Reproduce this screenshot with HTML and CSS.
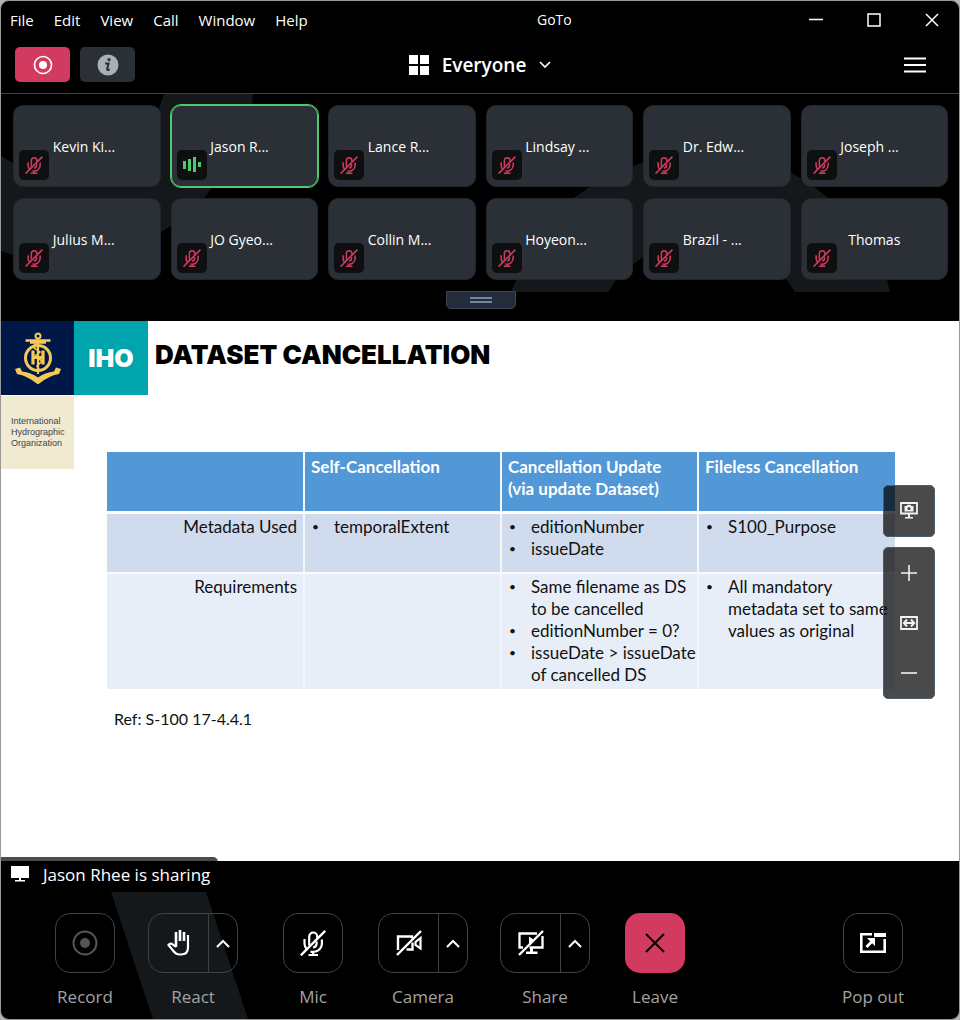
FILE: index.html
```html
<!DOCTYPE html>
<html lang="en">
<head>
<meta charset="utf-8">
<meta name="viewport" content="width=device-width, initial-scale=1">
<title>GoTo</title>
<link rel="stylesheet" href="styles.css">
</head>
<body>
<svg class="defs" aria-hidden="true">
  <symbol id="mic-off" viewBox="0 0 26 26">
    <path d="M9.2 15.4V6.5a4 4 0 0 1 8 0V8M16.6 11.5v2.4a4 4 0 0 1-3.6 3.6M4.500 9v4.500a8.500 8.500 0 0 0 2 5.400M21.900 9.500v4a8.700 8.700 0 0 1-11.400 8M13.200 22v3M8.500 25h9.500" fill="none" stroke="currentColor" stroke-width="2.200"/>
    <path d="M.8 25.300 25.200.9" stroke="currentColor" stroke-width="2.400"/>
  </symbol>
  <symbol id="chevron-up" viewBox="0 0 14 9"><path d="M1 8l6-6 6 6" fill="none" stroke="currentColor" stroke-width="2"/></symbol>
</svg>
<div class="window">
  <header class="titlebar">
    <nav class="menu">
      <button>File</button><button>Edit</button><button>View</button><button>Call</button><button>Window</button><button>Help</button>
    </nav>
    <h1 class="app-name">GoTo</h1>
    <div class="window-buttons">
      <button aria-label="Minimize"><svg width="14" height="14"><path d="M0 6.500h14" stroke="currentColor" stroke-width="1.400"/></svg></button>
      <button aria-label="Maximize"><svg width="14" height="14"><path d="M1 1h12v12H1z" fill="none" stroke="currentColor" stroke-width="1.500"/></svg></button>
      <button aria-label="Close"><svg width="14" height="14"><path d="M1 1l12 12M13 1 1 13" stroke="currentColor" stroke-width="1.500"/></svg></button>
    </div>
  </header>

  <div class="toolbar">
    <div class="toolbar-left">
      <button class="chip chip--rec" aria-label="Recording"><svg width="20" height="20"><circle cx="10" cy="10" r="8.500" fill="none" stroke="#fff" stroke-width="1.700"/><circle cx="10" cy="10" r="4" fill="#fff"/></svg></button>
      <button class="chip" aria-label="Information"><svg width="22" height="22"><circle cx="11" cy="11" r="10.500" fill="#a9afb8"/><circle cx="12" cy="5.700" r="1.600" fill="#2a3036"/><path d="M8 9.600h3.500l-1.300 5.400q-.2 1.600 2.600.4" fill="none" stroke="#2a3036" stroke-width="2"/></svg></button>
    </div>
    <button class="view-switch">
      <svg width="20" height="20"><path d="M0 0h9v9H0zM11 0h9v9h-9zM0 11h9v9H0zM11 11h9v9h-9z" fill="#fff"/></svg>
      Everyone
      <svg width="12" height="8"><path d="M1 1l5 5 5-5" fill="none" stroke="currentColor" stroke-width="1.600"/></svg>
    </button>
    <button class="hamburger" aria-label="Menu"><svg width="24" height="16"><path d="M1 1.500h22M1 8h22M1 14.500h22" stroke="#fff" stroke-width="2.200"/></svg></button>
  </div>

  <section class="participants" aria-label="Participants">
    <svg class="backdrop" viewBox="0 0 958 198" preserveAspectRatio="none" aria-hidden="true">
      <path d="M0 62l12 7Q110 100 158 14l5-14h89l-1 11Q245 58 210 95q-20 27-50 43Q95 174 12 161L0 157z"/>
      <path d="M510 198l5-12Q530 137 574 103q60-44 135-44 65 0 117 44 42 36 60 83l3 12H794l-8-12Q698 102 615 186l-8 12z"/>
    </svg>
    <ul class="tiles">
      <li class="tile"><span class="badge"><svg><use href="#mic-off"/></svg></span><span class="name">Kevin Ki...</span></li>
      <li class="tile tile--active"><span class="badge badge--live"><svg viewBox="0 0 18 16"><path d="M0 4h3v8H0zM5 2h3v12H5zM10 0h3v15h-3zM15 5h3v5h-3z" fill="currentColor"/></svg></span><span class="name">Jason R...</span></li>
      <li class="tile"><span class="badge"><svg><use href="#mic-off"/></svg></span><span class="name">Lance R...</span></li>
      <li class="tile"><span class="badge"><svg><use href="#mic-off"/></svg></span><span class="name">Lindsay ...</span></li>
      <li class="tile"><span class="badge"><svg><use href="#mic-off"/></svg></span><span class="name">Dr. Edw...</span></li>
      <li class="tile"><span class="badge"><svg><use href="#mic-off"/></svg></span><span class="name">Joseph ...</span></li>
      <li class="tile"><span class="badge"><svg><use href="#mic-off"/></svg></span><span class="name">Julius M...</span></li>
      <li class="tile"><span class="badge"><svg><use href="#mic-off"/></svg></span><span class="name">JO Gyeo...</span></li>
      <li class="tile"><span class="badge"><svg><use href="#mic-off"/></svg></span><span class="name">Collin M...</span></li>
      <li class="tile"><span class="badge"><svg><use href="#mic-off"/></svg></span><span class="name">Hoyeon...</span></li>
      <li class="tile"><span class="badge"><svg><use href="#mic-off"/></svg></span><span class="name">Brazil - ...</span></li>
      <li class="tile"><span class="badge"><svg><use href="#mic-off"/></svg></span><span class="name name--short">Thomas</span></li>
    </ul>
    <button class="grip" aria-label="Resize participants"><svg width="22" height="6"><path d="M0 1h22M0 5h22" stroke="#8fa6bd" stroke-width="1.500"/></svg></button>
  </section>

  <main class="slide">
    <div class="slide-head">
      <div class="brand">
        <div class="brand-mark">
          <svg width="46" height="52" viewBox="0 0 46 52" aria-label="IHO emblem">
            <g fill="none" stroke="#f5c956">
              <circle cx="23" cy="4" r="2.500" stroke-width="2"/>
              <circle cx="23" cy="26" r="12.500" stroke-width="3"/>
              <path d="M10.500 8.500h25M15 10.500h16" stroke-width="2.600"/>
              <path d="M18 18.500v14M28 18.500v14M18 25.500h10" stroke-width="3.200"/>
              <path d="M23 7v35" stroke-width="2.200"/>
              <path d="M21 11l-3 4 7 5-5 4 7 5-5 5 3 5" stroke-width="1.600"/>
            </g>
            <path d="M0 37l5-1.500 2 4q9 1 16 6 7-5 16-6l2-4 5 1.500-2 5q-11 2-21 10.500Q13 44 2 42z" fill="#f5c956"/>
          </svg>
        </div>
        <div class="brand-abbr">IHO</div>
        <div class="brand-name">International<br>Hydrographic<br>Organization</div>
      </div>
      <h2 class="slide-title">DATASET CANCELLATION</h2>
    </div>
    <div class="slide-body">
      <table class="matrix">
        <thead>
          <tr><th></th><th scope="col">Self-Cancellation</th><th scope="col">Cancellation Update<br>(via update Dataset)</th><th scope="col">Fileless Cancellation</th></tr>
        </thead>
        <tbody>
          <tr class="row-a"><th scope="row">Metadata Used</th><td><ul><li>temporalExtent</li></ul></td><td><ul><li>editionNumber</li><li>issueDate</li></ul></td><td><ul><li>S100_Purpose</li></ul></td></tr>
          <tr class="row-b"><th scope="row">Requirements</th><td></td><td><ul><li>Same filename as DS<br>to be cancelled</li><li>editionNumber = 0?</li><li>issueDate &gt; issueDate<br>of cancelled DS</li></ul></td><td><ul><li>All mandatory<br>metadata set to same<br>values as original</li></ul></td></tr>
        </tbody>
      </table>
      <p class="slide-ref">Ref: S-100 17-4.4.1</p>
    </div>
    <div class="float-tools">
      <div class="float-group">
        <button aria-label="Take screenshot"><svg width="18" height="18"><path d="M1 1h16v10.500H1z" fill="none" stroke="currentColor" stroke-width="1.800"/><path d="M4.500 4h2l1-1.200h3l1 1.200h2v5.500h-9zM8 12h2v3h3v1.500H5V15h3z" fill="currentColor"/><circle cx="9" cy="6.500" r="1.500" fill="#484848"/></svg></button>
      </div>
      <div class="float-group">
        <button aria-label="Zoom in"><svg width="16" height="16"><path d="M0 8h16M8 0v16" stroke="currentColor" stroke-width="1.600"/></svg></button>
        <button aria-label="Fit to width"><svg width="18" height="14"><path d="M1 1h16v12H1z" fill="none" stroke="currentColor" stroke-width="1.800"/><path d="M4 7h10M7 3.500 3.800 7 7 10.500M11 3.500 14.200 7 11 10.500" fill="none" stroke="currentColor" stroke-width="1.900"/></svg></button>
        <button aria-label="Zoom out"><svg width="16" height="16"><path d="M0 8h16" stroke="currentColor" stroke-width="1.600"/></svg></button>
      </div>
    </div>
  </main>

  <div class="sharing">
    <div class="sharing-label">
      <svg width="18" height="16"><path d="M0 0h18v12H0zM8 12h2v2h4v1.500H4V14h4z" fill="#fff"/></svg>
      Jason Rhee is sharing
    </div>
  </div>

  <footer class="controls">
    <svg class="stripe" width="140" height="128" aria-hidden="true"><path d="M0 1h95l42 127H42z"/></svg>
    <div class="control-row">
      <div class="control">
        <button class="key key--dim" aria-labelledby="l-rec"><svg width="26" height="26"><circle cx="13" cy="13" r="11.500" fill="none" stroke="currentColor" stroke-width="2"/><circle cx="13" cy="13" r="5" fill="currentColor"/></svg></button>
        <span class="label" id="l-rec">Record</span>
      </div>
      <div class="control">
        <div class="split">
          <button class="key" aria-labelledby="l-react"><svg width="24" height="26"><path d="M9 17V2M13 11V0M17 11V2" fill="none" stroke="currentColor" stroke-width="2.600"/><path d="M21 5v12.500q0 7-7 7h-1.500q-3.500 0-5.500-2.800L1.500 15q1.800-2.400 4.500-.4l3 2.300" fill="none" stroke="currentColor" stroke-width="2.200"/></svg></button>
          <button class="more" aria-label="React options"><svg width="14" height="9"><use href="#chevron-up"/></svg></button>
        </div>
        <span class="label" id="l-react">React</span>
      </div>
      <div class="control">
        <button class="key" aria-labelledby="l-mic"><svg width="26" height="26"><use href="#mic-off"/></svg></button>
        <span class="label" id="l-mic">Mic</span>
      </div>
      <div class="control">
        <div class="split">
          <button class="key" aria-labelledby="l-cam"><svg width="26" height="26"><path d="M2 20V6.500h14v2M16.500 12.500v7h-6" fill="none" stroke="currentColor" stroke-width="2.400"/><path d="M24.500 8v10.500L19.500 15v-3z" fill="none" stroke="currentColor" stroke-width="2.200"/><path d="M1 25 25 1" stroke="currentColor" stroke-width="2.400"/></svg></button>
          <button class="more" aria-label="Camera options"><svg width="14" height="9"><use href="#chevron-up"/></svg></button>
        </div>
        <span class="label" id="l-cam">Camera</span>
      </div>
      <div class="control">
        <div class="split">
          <button class="key" aria-labelledby="l-share"><svg width="26" height="26"><path d="M5 17.500H1.500V3.500H19M24.500 6v11.500h-13" fill="none" stroke="currentColor" stroke-width="2.300"/><path d="M11 6.500l5 3.500-5 5zM12 18h3v3.500h4.500V24H8v-2.500h4z" fill="currentColor"/><path d="M1 25 25 1" stroke="currentColor" stroke-width="2.400"/></svg></button>
          <button class="more" aria-label="Share options"><svg width="14" height="9"><use href="#chevron-up"/></svg></button>
        </div>
        <span class="label" id="l-share">Share</span>
      </div>
      <div class="control">
        <button class="key key--leave" aria-labelledby="l-leave"><svg width="20" height="20"><path d="M1 1l18 18M19 1 1 19" stroke="currentColor" stroke-width="2"/></svg></button>
        <span class="label" id="l-leave">Leave</span>
      </div>
    </div>
    <div class="control">
      <button class="key" aria-labelledby="l-pop"><svg width="26" height="20"><path d="M12 1.300H1.300v17.400h23.400V6" fill="none" stroke="currentColor" stroke-width="2.600"/><path d="M14 0h12v4H14zM7 5h8v8l-2.800-2.800L7.500 15l-2-2 4.700-4.800z" fill="currentColor"/></svg></button>
      <span class="label" id="l-pop">Pop out</span>
    </div>
  </footer>
</div>
</body>
</html>
```

FILE: styles.css
```css
* { box-sizing: border-box; }
body {
  margin: 0;
  background: #b4b4b4;
  font-family: "Open Sans", "Noto Sans", sans-serif;
  color: #fff;
}
button {
  display: flex;
  align-items: center;
  justify-content: center;
  margin: 0;
  padding: 0;
  border: 0;
  background: none;
  color: inherit;
  font: inherit;
}
ul { margin: 0; padding: 0; list-style: none; }
.defs { display: none; }

.window {
  display: flex;
  flex-direction: column;
  min-height: 100vh;
  overflow: hidden;
  border: 1px solid #999;
  border-radius: 9px;
  background: #000;
}

.titlebar {
  display: grid;
  grid-template-columns: auto 1fr auto;
  align-items: center;
  height: 37px;
  padding: 0 20px 0 9px;
  font-size: 15px;
}
.menu { display: flex; gap: 20px; }
.app-name {
  margin: 0;
  padding-right: 8px;
  font-size: 14px;
  font-weight: 400;
  text-align: center;
}
.window-buttons { display: flex; justify-content: flex-end; gap: 44px; }

.toolbar {
  display: grid;
  grid-template-columns: 1fr auto 1fr;
  align-items: center;
  height: 56px;
  padding: 0 14px 2px;
  border-bottom: 1px solid #3c444b;
}
.toolbar-left { display: flex; gap: 10px; }
.chip {
  width: 55px;
  height: 35px;
  border-radius: 5px;
  background: #2a3036;
}
.chip--rec { background: #d33a60; }
.view-switch { gap: 13px; font-size: 19px; font-weight: 600; }
.hamburger { justify-self: end; margin-right: 18px; }

.participants {
  position: relative;
  display: flex;
  flex-direction: column;
  align-items: center;
  padding: 11px 11px 12px 12px;
}
.backdrop {
  position: absolute;
  top: 0;
  left: 0;
  width: 100%;
  height: 198px;
  fill: #14181b;
}
.tiles {
  position: relative;
  display: grid;
  grid-template-columns: repeat(6, 1fr);
  gap: 11px 10px;
  width: 100%;
}
.tile {
  position: relative;
  display: flex;
  align-items: center;
  justify-content: center;
  height: 82px;
  border: 1px solid #20262b;
  border-radius: 10px;
  background: #2a3036;
}
.tile--active { border-color: #4fcb6e; outline: 1px solid #4fcb6e; }
.name { width: 68px; font-size: 14px; white-space: nowrap; }
.name--short { text-align: center; }
.badge {
  position: absolute;
  left: 5px;
  bottom: 6px;
  display: flex;
  align-items: center;
  justify-content: center;
  width: 30px;
  height: 30px;
  border-radius: 5px;
  background: #0d0f11;
  color: #d33a60;
}
.badge svg { width: 18px; height: 18px; }
.badge--live { color: #4fcb6e; }
.grip {
  position: relative;
  width: 70px;
  height: 18px;
  margin: 11px 0 0;
  border: 1px solid #3b4654;
  border-radius: 0 0 5px 5px;
  background: #222c3a;
}

.slide {
  position: relative;
  flex: 1;
  background: #fff;
  color: #111;
}
.slide-head { display: flex; gap: 7px; }
.brand {
  display: grid;
  grid-template-columns: 73px 74px;
  grid-template-rows: 74px 73px;
  row-gap: 1px;
}
.brand-mark, .brand-abbr, .brand-name { display: flex; align-items: center; }
.brand-mark { justify-content: center; background: #001848; }
.brand-abbr {
  justify-content: center;
  background: #00a4ac;
  color: #fff;
  font: 900 25px Inter, sans-serif;
}
.brand-name {
  padding-left: 10px;
  background: #f0ead0;
  color: #3c4450;
  font: 9px/11px "Liberation Sans", Arial, sans-serif;
}
.slide-title {
  margin: 19px 0 0;
  color: #000;
  font: 900 26px/30px Inter, sans-serif;
}
.slide-body {
  margin: -17px 64px 0 106px;
  font-family: Lato, sans-serif;
  font-size: 17px;
  line-height: 22px;
}
.matrix {
  width: 100%;
  table-layout: fixed;
  border-collapse: collapse;
}
.matrix th, .matrix td {
  padding: 2px 6px 3px;
  border-left: 2px solid #f4f8fc;
  text-align: left;
  vertical-align: top;
  white-space: nowrap;
}
.matrix tr > :first-child { border-left: 0; }
.matrix thead th {
  height: 60px;
  padding-top: 4px;
  background: #5297d6;
  color: #fff;
  font-weight: 700;
}
.matrix tbody th { font-weight: 400; text-align: right; }
.row-a { height: 61px; border-top: 3px solid #fff; background: #d0dcee; }
.row-b { height: 115px; border-top: 2px solid #f8fbfe; background: #e8eef7; }
.matrix li { position: relative; padding-left: 23px; }
.matrix li::before { content: "•"; position: absolute; left: 1px; font-size: 12px; }
.slide-ref { margin: 19px 7px; font-size: 16px; }

.float-tools {
  position: absolute;
  top: 164px;
  right: 24px;
  display: grid;
  gap: 10px;
  color: #f2f2f2;
}
.float-group {
  border: 1px solid #4d5d6b;
  border-radius: 5px;
  background: rgba(0, 0, 0, 0.71);
}
.float-group button { width: 50px; height: 50px; }

.sharing { display: flex; height: 30px; }
.sharing-label {
  position: relative;
  display: flex;
  align-items: center;
  gap: 14px;
  height: 34px;
  margin-top: -4px;
  padding: 0 8px 0 10px;
  border-radius: 0 5px 0 0;
  background: rgba(0, 0, 0, 0.7);
  font-size: 17px;
}

.controls {
  position: relative;
  display: flex;
  justify-content: space-between;
  height: 128px;
  padding: 22px 55px 0 54px;
}
.stripe { position: absolute; top: 0; left: 110px; fill: #14181b; }
.control-row {
  display: grid;
  grid-template-columns: 93px 135px 95px 122px 125px 60px;
  justify-items: start;
}
.control {
  position: relative;
  display: flex;
  flex-direction: column;
  align-items: center;
  gap: 12px;
}
.key {
  width: 60px;
  height: 60px;
  border: 1px solid #404346;
  border-radius: 15px;
}
.key--dim { color: #555; }
.key--leave { border: 0; background: #d33a60; color: #000; }
.split { display: flex; border: 1px solid #404346; border-radius: 15px; }
.split .key { height: 58px; border-width: 0 1px 0 0; border-radius: 0; }
.more { width: 28px; }
.label { color: #a3a3a3; font-size: 17px; line-height: 24px; white-space: nowrap; }
```
